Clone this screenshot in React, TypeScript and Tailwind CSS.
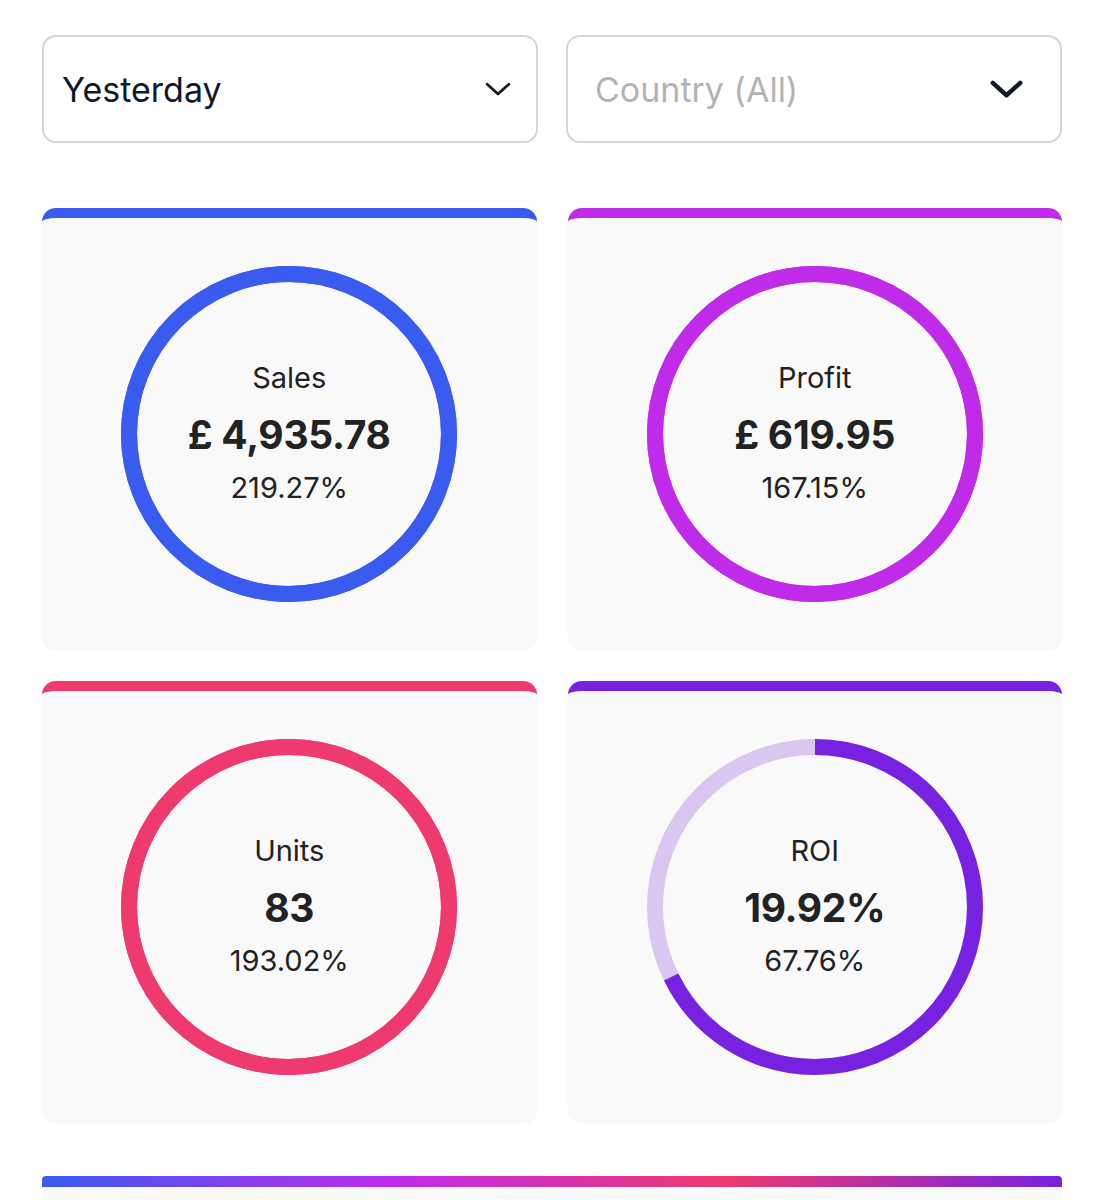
import React from 'react';

type Stat = {
  label: string;
  value: string;
  change: string;
  color: string;
  track?: string;
  progress: number;
  border: string;
};

const stats: Stat[] = [
  { label: 'Sales', value: '£ 4,935.78', change: '219.27%', color: '#3a5bef', progress: 1, border: 'border-t-[#3a5bef]' },
  { label: 'Profit', value: '£ 619.95', change: '167.15%', color: '#c02bea', progress: 1, border: 'border-t-[#c02bea]' },
  { label: 'Units', value: '83', change: '193.02%', color: '#ee3a6e', progress: 1, border: 'border-t-[#ee3a6e]' },
  { label: 'ROI', value: '19.92%', change: '67.76%', color: '#7722e0', track: '#d9c6f1', progress: 0.6776, border: 'border-t-[#7722e0]' },
];

function Chevron({ size, stroke }: { size: number; stroke: number }) {
  return (
    <svg width={size} height={size * 0.55} viewBox="0 0 24 13" fill="none" aria-hidden="true">
      <polyline
        points="2,2 12,11 22,2"
        stroke="#111827"
        strokeWidth={stroke}
        strokeLinecap="round"
        strokeLinejoin="round"
      />
    </svg>
  );
}

function Ring({ stat }: { stat: Stat }) {
  const r = 160;
  const c = 2 * Math.PI * r;
  return (
    <div className="relative flex h-[336px] w-[336px] items-center justify-center">
      <svg width="336" height="336" viewBox="0 0 336 336" className="absolute inset-0">
        <circle cx="168" cy="168" r={r} fill="none" stroke={stat.track ?? stat.color} strokeWidth="16" />
        <circle
          cx="168"
          cy="168"
          r={r}
          fill="none"
          stroke={stat.color}
          strokeWidth="16"
          strokeDasharray={`${c * stat.progress} ${c}`}
          transform="rotate(-90 168 168)"
        />
      </svg>
      <div className="relative flex flex-col items-center pb-[3px] text-[#222]">
        <div className="text-[29px] leading-none">{stat.label}</div>
        <div className="mt-[23px] text-[39px] font-bold leading-none tracking-[-0.3px]">{stat.value}</div>
        <div className="mt-[19px] text-[29px] leading-none">{stat.change}</div>
      </div>
    </div>
  );
}

export default function App() {
  return (
    <div
      className="min-h-[1200px] bg-white px-[42px] pt-[35px]"
      style={{ fontFamily: 'Inter, "Noto Sans", sans-serif' }}
    >
      <div className="grid grid-cols-2 gap-[28px]">
        <div className="flex h-[108px] items-center justify-between rounded-[14px] border-2 border-[#d6d6d6] bg-white pl-[18px] pr-[25px]">
          <span className="text-[34px] text-[#111827]">Yesterday</span>
          <Chevron size={26} stroke={2.6} />
        </div>
        <div className="flex h-[108px] items-center justify-between rounded-[14px] border-2 border-[#d6d6d6] bg-white pl-[27px] pr-[37px]">
          <span className="text-[34px] text-[#b3b3b3]">Country (All)</span>
          <Chevron size={33} stroke={3.2} />
        </div>
      </div>

      <div className="mt-[65px] grid grid-cols-2 gap-x-[31px] gap-y-[31px]">
        {stats.map((s) => (
          <div
            key={s.label}
            className={`flex h-[442px] items-center justify-center rounded-[14px] border-t-[10px] ${s.border} bg-[#f9f9f9] shadow-[0_0_2px_rgba(0,0,0,0.07)]`}
          >
            <Ring stat={s} />
          </div>
        ))}
      </div>

      <div className="mt-[53px]">
        <div className="h-[11px] rounded-t-[4px] bg-[linear-gradient(90deg,#3a5bef_0%,#c02bea_35%,#ee3a6e_67%,#7722e0_100%)]" />
        <div className="h-[40px] bg-[#f9f9f9]" />
      </div>
    </div>
  );
}
